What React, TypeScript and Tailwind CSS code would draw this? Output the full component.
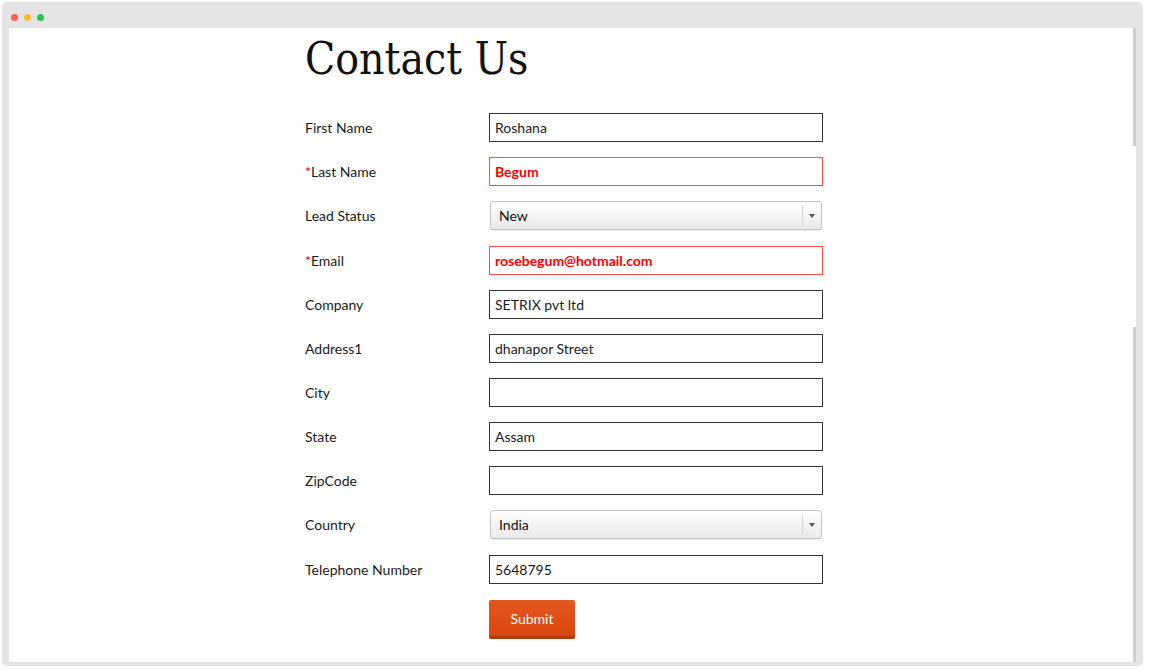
import type { ReactNode } from 'react'

type Field = {
  label: string
  value: string
  required?: boolean
  kind?: 'text' | 'select'
}

const FIELDS: Field[] = [
  { label: 'First Name', value: 'Roshana' },
  { label: 'Last Name', value: 'Begum', required: true },
  { label: 'Lead Status', value: 'New', kind: 'select' },
  { label: 'Email', value: 'rosebegum@hotmail.com', required: true },
  { label: 'Company', value: 'SETRIX pvt ltd' },
  { label: 'Address1', value: 'dhanapor Street' },
  { label: 'City', value: '' },
  { label: 'State', value: 'Assam' },
  { label: 'ZipCode', value: '' },
  { label: 'Country', value: 'India', kind: 'select' },
  { label: 'Telephone Number', value: '5648795' },
]

function Row({ label, required, select, children }: { label: string; required?: boolean; select?: boolean; children: ReactNode }) {
  return (
    <div className={select ? 'flex items-center h-[29px] mt-[2px] mb-[16px]' : 'flex items-center h-[29px] mb-[15px]'}>
      <div className="w-[184px] text-[14px] text-[#1a1a1a]">
        {required && <span className="text-[#e00]">*</span>}
        {label}
      </div>
      {children}
    </div>
  )
}

function Input({ f }: { f: Field }) {
  if (f.kind === 'select') {
    return (
      <div className="ml-[1px] w-[332px] h-[29px] flex items-center rounded-[3px] border border-[#c4c4c4] bg-gradient-to-b from-white to-[#e9e9e9] shadow-[0_1px_1px_rgba(0,0,0,0.08)]">
        <span className="flex-1 pl-[8px] text-[14px] text-[#111]">{f.value}</span>
        <span className="w-[19px] h-[20px] border-l border-[#d6d6d6] flex items-center justify-center">
          <span className="block w-0 h-0 border-l-[3px] border-r-[3px] border-t-[4px] border-l-transparent border-r-transparent border-t-[#555]" />
        </span>
      </div>
    )
  }
  const err = f.required
  return (
    <div
      className={
        err
          ? 'w-[334px] h-[29px] flex items-center pl-[5px] border border-[#ff4a4a] text-[14px] font-bold text-[#ff0000]'
          : 'w-[334px] h-[29px] flex items-center pl-[5px] border border-[#333] text-[14px] text-[#1a1a1a]'
      }
    >
      {f.value}
    </div>
  )
}

export default function App() {
  return (
    <div className="w-[1150px] h-[670px] bg-white p-[2px] pr-[7px] pb-[4px]" style={{ fontFamily: 'Lato, "Open Sans", sans-serif' }}>
      <div className="w-full h-full bg-[#e4e4e4] rounded-[5px] flex flex-col">
        <div className="h-[26px] flex items-center gap-[6px] pl-[9px] pt-[4px]">
          <span className="w-[7px] h-[7px] rounded-full bg-[#fe5f57]" />
          <span className="w-[7px] h-[7px] rounded-full bg-[#febc2e]" />
          <span className="w-[7px] h-[7px] rounded-full bg-[#29c840]" />
        </div>
        <div className="flex-1 flex ml-[7px] mr-[7px] mb-[4px]">
          <div className="flex-1 bg-white pl-[296px]">
            <h1 className="text-[44px] leading-none mt-[9px] mb-[32px] text-[#111]" style={{ fontFamily: '"DejaVu Serif Condensed", "DejaVu Serif", serif', fontStretch: 'condensed' }}>
              Contact Us
            </h1>
            {FIELDS.map(f => (
              <Row key={f.label} label={f.label} required={f.required} select={f.kind === 'select'}>
                <Input f={f} />
              </Row>
            ))}
            <div className="pl-[184px] pt-[1px]">
              <button className="w-[86px] h-[39px] rounded-[2px] bg-gradient-to-b from-[#e4571f] to-[#d8470f] border-b-[3px] border-[#b83a0a] text-white text-[14px]">
                Submit
              </button>
            </div>
          </div>
          <div className="w-[3px] bg-white flex flex-col">
            <div className="h-[118px] bg-[#cfcfcf]" />
            <div className="h-[181px] bg-white" />
            <div className="flex-1 bg-[#cfcfcf]" />
          </div>
        </div>
      </div>
    </div>
  )
}
